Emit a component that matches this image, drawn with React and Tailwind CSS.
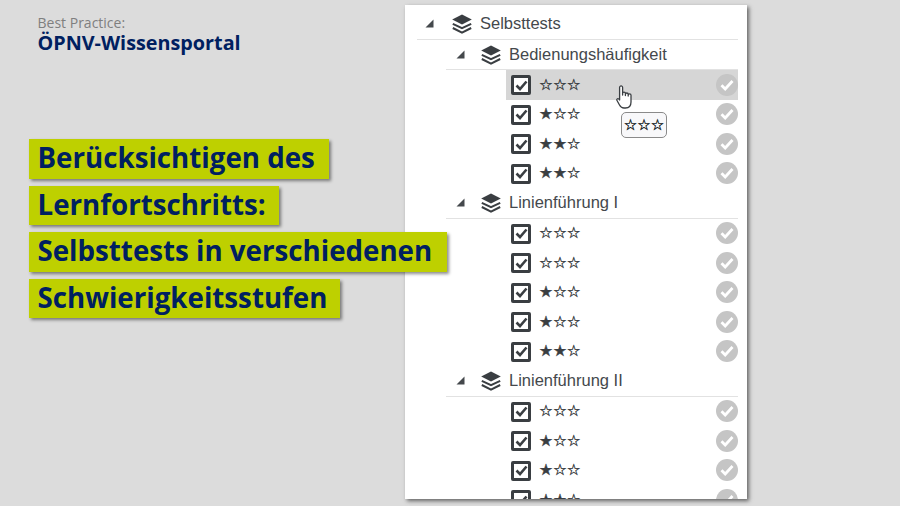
const groups = [
  { title: 'Bedienungshäufigkeit', levels: [0, 1, 2, 2] },
  { title: 'Linienführung I', levels: [0, 0, 1, 1, 2] },
  { title: 'Linienführung II', levels: [0, 1, 1, 2] },
];

const labels = [
  { text: 'Berücksichtigen des', width: 'w-[300px]' },
  { text: 'Lernfortschritts:', width: 'w-[250px]' },
  { text: 'Selbsttests in verschiedenen', width: 'w-[418px]' },
  { text: 'Schwierigkeitsstufen', width: 'w-[311px]' },
];

function LayersIcon() {
  return (
    <svg width="20" height="20" viewBox="0 0 20 20" className="shrink-0" aria-hidden>
      <path d="M10 .5 19.8 5.5 10 10.5.2 5.5z" fill="#3a3e42" />
      <path d="M.8 9.8 10 14.2 19.2 9.8" fill="none" stroke="#3a3e42" strokeWidth="2" />
      <path d="M.8 14 10 18.6 19.2 14" fill="none" stroke="#3a3e42" strokeWidth="2" />
    </svg>
  );
}

function Caret() {
  return (
    <svg width="9" height="9" viewBox="0 0 9 9" className="shrink-0" aria-hidden>
      <path d="M8.5.5v8H.5z" fill="#44484c" />
    </svg>
  );
}

function Stars({ level, className = 'text-[#3a3e42]' }) {
  return (
    <span className={`font-['DejaVu_Sans',sans-serif] text-[15.5px] leading-none [-webkit-text-stroke:0.35px_currentColor] ${className}`}>
      {'★'.repeat(level) + '☆'.repeat(3 - level)}
    </span>
  );
}

function Row({ level, active }) {
  return (
    <div className={`ml-[89px] flex h-[29.5px] items-center pl-[5px] ${active ? 'bg-[#d6d6d6]' : ''}`}>
      <span className="mt-px flex h-5 w-5 shrink-0 items-center justify-center rounded-[2px] border-[3px] border-[#3a3e42] bg-white">
        <svg width="13" height="11" viewBox="0 0 13 11" aria-hidden>
          <path d="M1.5 5.5 5 9l6.5-7.5" fill="none" stroke="#3a3e42" strokeWidth="2.6" />
        </svg>
      </span>
      <span className="ml-2">
        <Stars level={level} />
      </span>
      <span className="ml-auto flex h-[22px] w-[22px] items-center justify-center rounded-full bg-[#c5c5c5]">
        <svg width="14" height="12" viewBox="0 0 14 12" aria-hidden>
          <path d="M1.5 6.2 5.2 10l7.3-8" fill="none" stroke="#fff" strokeWidth="2.8" />
        </svg>
      </span>
    </div>
  );
}

function Heading({ title, inset, caretGap }) {
  return (
    <div className={`flex items-center border-b border-[#e2e2e2] text-[#44484c] ${inset}`}>
      <span className={caretGap}>
        <Caret />
      </span>
      <LayersIcon />
      <span className="ml-2 text-[16.5px]">{title}</span>
    </div>
  );
}

function HandCursor() {
  return (
    <svg width="18" height="24" viewBox="0 0 18 24" className="absolute left-[616px] top-[85px] z-20" aria-hidden>
      <path
        d="M3.6 15V2.4a1.5 1.5 0 0 1 3 0V10V8.6a1.4 1.4 0 0 1 2.8 0V10.5V9.4a1.4 1.4 0 0 1 2.8 0V11V10.2a1.4 1.4 0 0 1 2.8 0V17c0 4-2 6-5.5 6H8c-2.5 0-3.5-1.2-4.5-3L1 15.5c-.9-1.6 1.2-2.8 2.6-.5z"
        fill="#fff"
        stroke="#3a3e42"
        strokeWidth="1.3"
        strokeLinejoin="round"
      />
    </svg>
  );
}

export default function App() {
  return (
    <div className="relative flex h-[506px] w-[900px] overflow-hidden bg-[#dcdcdc] font-['Liberation_Sans',sans-serif]">
      <div className="relative z-10 w-[405px] shrink-0 pl-[29px] font-['Open_Sans',sans-serif]">
        <div className="pl-[8.5px] pt-[13px]">
          <div className="text-[14px] leading-[19px] text-[#7f7f7f]">Best Practice:</div>
          <div className="text-[19.8px] font-bold leading-[22px] text-[#002060]">ÖPNV-Wissensportal</div>
        </div>
        <div className="mt-[85px] flex flex-col gap-[7px]">
          {labels.map((label) => (
            <div
              key={label.text}
              className={`flex h-[39.5px] shrink-0 items-center whitespace-nowrap bg-[#bed000] pb-px pl-[8.5px] text-[27.7px] font-bold text-[#002060] shadow-[2px_2px_3px_rgba(0,0,0,0.45)] ${label.width}`}
            >
              {label.text}
            </div>
          ))}
        </div>
      </div>

      <div className="mt-[5px] h-[494px] w-[342px] shrink-0 overflow-hidden bg-white pl-3 pr-[9px] shadow-[2px_2px_4px_rgba(0,0,0,0.55)]">
        <Heading title="Selbsttests" inset="h-[35px] pt-[3px]" caretGap="ml-2 mr-[18px]" />
        {groups.map((group, g) => (
          <div key={group.title}>
            <Heading
              title={group.title}
              inset={g === 0 ? 'ml-[29px] h-[30px]' : 'ml-[29px] h-[30.5px]'}
              caretGap="ml-[10px] mr-4"
            />
            {group.levels.map((level, i) => (
              <Row key={i} level={level} active={g === 0 && i === 0} />
            ))}
          </div>
        ))}
      </div>

      <HandCursor />
      <div className="absolute left-[621px] top-[112px] z-20 flex h-[26px] w-[46px] items-center justify-center rounded-[5px] border border-[#8a8a8a] bg-[#f8f8fa]">
        <Stars level={0} className="!text-[15px] text-[#101820]" />
      </div>
    </div>
  );
}
